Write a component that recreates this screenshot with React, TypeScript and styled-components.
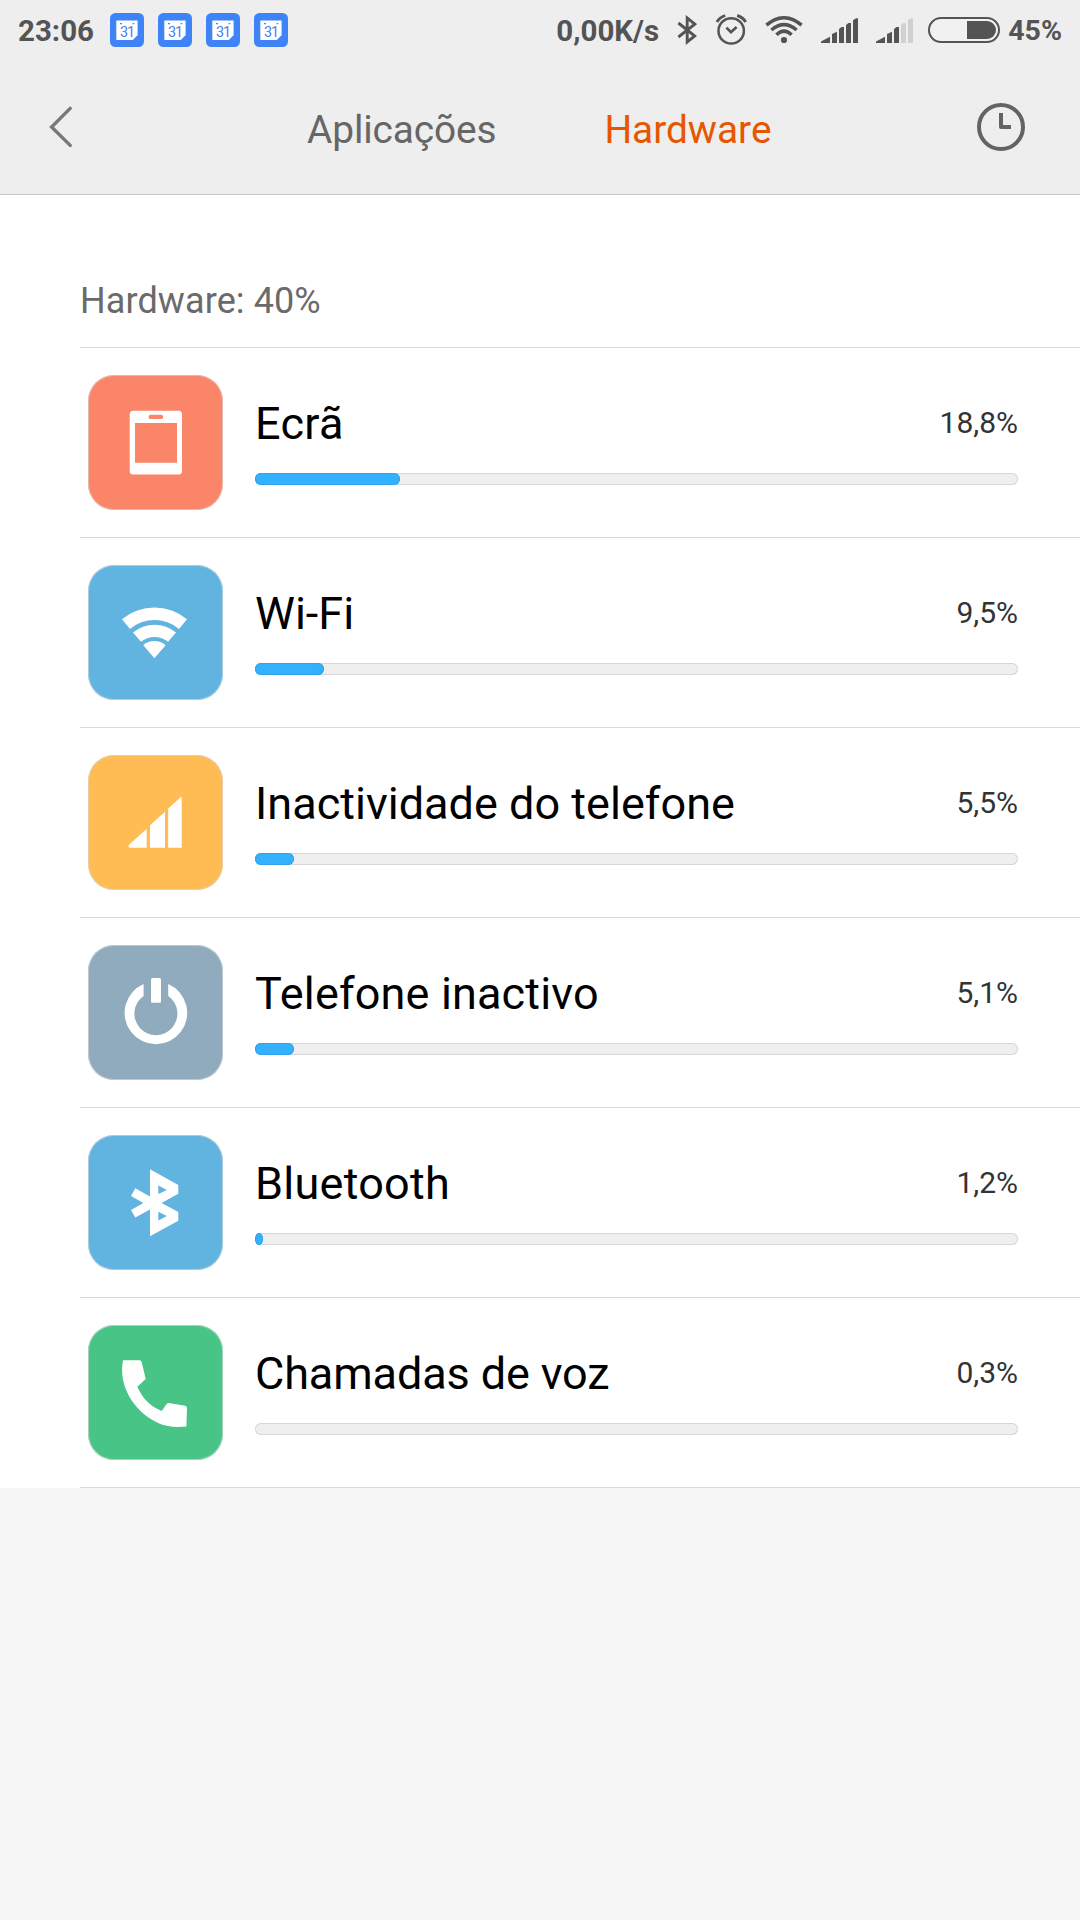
import React from 'react';
import styled, { createGlobalStyle } from 'styled-components';

const GlobalStyle = createGlobalStyle`
  * { box-sizing: border-box; }
  body {
    margin: 0;
    background: #f7f7f7;
    font-family: Roboto, "Noto Sans", sans-serif;
  }
  svg { display: block; flex: none; }
`;

const INK = '#545454';

const Screen = styled.div`
  width: 1080px;
  min-height: 1920px;
  background: #f7f7f7;
`;

const TopArea = styled.header`
  height: 195px;
  background: #eeeeee;
  border-bottom: 1px solid #c8c8c8;
`;

const StatusBar = styled.div`
  display: flex;
  justify-content: space-between;
  height: 60px;
  padding: 0 18px 0 18px;
  color: ${INK};
`;

const StatusGroup = styled.div`
  display: flex;
  align-items: center;
  height: 60px;
`;

const StatusText = styled.span<{ $size?: number }>`
  display: block;
  padding-top: 2px;
  font-size: ${p => p.$size ?? 29.5}px;
  font-weight: 700;
  line-height: 60px;
  white-space: nowrap;
`;

const StatusIcon = styled.span<{ $gap: number }>`
  margin-left: ${p => p.$gap}px;
`;

const NavBar = styled.nav`
  display: grid;
  grid-template-columns: 307px 1fr 103px;
  align-items: center;
  height: 134px;
`;

const IconButton = styled.button<{ $indent?: number }>`
  display: flex;
  border: 0;
  background: none;
  padding: 0 0 0 ${p => p.$indent ?? 0}px;
`;

const Tabs = styled.div`
  display: flex;
  gap: 108px;
`;

const Tab = styled.span<{ $active?: boolean }>`
  font-size: 38.8px;
  letter-spacing: ${p => (p.$active ? 0 : -0.1)}px;
  line-height: 50px;
  padding-top: 5px;
  color: ${p => (p.$active ? '#e65600' : '#666666')};
`;

const List = styled.main`
  background: #ffffff;
  padding-left: 80px;
`;

const SectionTitle = styled.h2`
  display: flex;
  align-items: flex-end;
  height: 153px;
  margin: 0;
  padding-bottom: 24px;
  border-bottom: 1px solid #d9d9d9;
  font-size: 36px;
  font-weight: 400;
  letter-spacing: 0.1px;
  line-height: 44px;
  color: #6a6a6a;
`;

const Row = styled.section`
  display: flex;
  align-items: center;
  gap: 32px;
  height: 190px;
  padding: 0 62px 0 8px;
  border-bottom: 1px solid #d9d9d9;
`;

const Tile = styled.div<{ $color: string }>`
  flex: none;
  width: 135px;
  height: 135px;
  border-radius: 26px;
  background: ${p => p.$color};
  box-shadow: inset 0 0 0 1px rgba(215, 215, 215, 0.65);
`;

const Details = styled.div`
  flex: 1;
  align-self: flex-start;
  display: flex;
  flex-direction: column;
  gap: 19px;
  padding-top: 46px;
`;

const Labels = styled.div`
  display: flex;
  justify-content: space-between;
  align-items: flex-start;
  height: 60px;
`;

const Name = styled.span<{ $tracking: number }>`
  font-size: 45px;
  letter-spacing: ${p => p.$tracking}px;
  line-height: 59px;
  color: #000000;
`;

const Percent = styled.span`
  font-size: 30px;
  line-height: 57px;
  color: #333333;
`;

const Track = styled.div`
  height: 12px;
  border-radius: 6px;
  background: #efefef;
  box-shadow: inset 0 0 0 1px #d6d6d6;
`;

const Fill = styled.div`
  height: 12px;
  border-radius: min(6px, 50%) / 6px;
  background: #33b1ff;
  box-shadow: inset 0 0 0 1px #2fa3eb;
`;

const CalendarIcon = () => (
  <svg width="34" height="34" viewBox="0 0 34 34">
    <rect width="34" height="34" rx="5.5" fill="#3f83f8" />
    <path d="M6.3 7.6H27.6V22.2L22.8 27H6.3Z" fill="#fff" />
    <path d="M10 10h2v1.3h-2zM22.6 10h1.6v1.3h-1.6z" fill="#3f83f8" />
    <text x="9.9" y="23.5" fontSize="14.4" letterSpacing="-1" fontWeight="400" fill="#3f83f8" fontFamily="Roboto, sans-serif">31</text>
  </svg>
);

const BluetoothStatus = () => (
  <svg width="20" height="30" viewBox="0 0 20 30" fill="none" stroke={INK} strokeWidth="2.9">
    <path d="M1.4 8 L17.8 21 L10.2 27 V3 L17.8 9.2 L1.4 22" />
  </svg>
);

const AlarmStatus = () => (
  <svg width="33" height="32" viewBox="0 0 33 32" fill="none" stroke={INK}>
    <circle cx="16.2" cy="16.9" r="12.7" strokeWidth="2.5" />
    <path d="M11.4 13.6 L16 18.2 L21.6 12.9" strokeWidth="2.7" />
    <path d="M1.9 7.9 Q4.6 3.4 10.2 1.5 M22.2 1.5 Q28 3.4 30.7 7.9" strokeWidth="2.9" />
  </svg>
);

const WifiStatus = () => (
  <svg width="38" height="28" viewBox="0 0 38 28" fill="none" stroke={INK} strokeWidth="3.5">
    <path d="M1.4 9.2 Q19 -5.6 36.6 9.2 M6.4 14 Q19 3.2 31.6 14 M11.4 18.8 Q19 11.3 26.6 18.8" />
    <circle cx="19" cy="24" r="3.1" fill={INK} stroke="none" />
  </svg>
);

const SignalStatus = ({ bars }: { bars: number }) => {
  const shapes = [
    'M0 23.5 L9 18.7 V25 H0Z',
    'M11 16 L16 13.7 V25 H11Z',
    'M18 11 L20.5 9 H23 V25 H18Z',
    'M25 7 L27.5 5 H30 V25 H25Z',
    'M32 2.3 L35 0.2 H37 V25 H32Z',
  ];
  return (
    <svg width="37" height="26" viewBox="0 -1 37 26">
      {shapes.map((d, i) => <path key={d} d={d} fill={i < bars ? INK : '#d0d0d0'} />)}
    </svg>
  );
};

const BatteryStatus = () => (
  <svg width="72" height="26" viewBox="0 0 72 26">
    <rect x="1" y="1" width="70" height="24" rx="12" fill="#f1f1f1" stroke={INK} strokeWidth="2" />
    <path d="M39 4H59A9 9 0 0 1 59 22H39Z" fill={INK} />
  </svg>
);

const BackIcon = () => (
  <svg width="24" height="42" viewBox="0 0 24 42" fill="none" stroke="#787878" strokeWidth="3.4" strokeLinecap="round">
    <path d="M21.2 2.4 L2.6 21 L21.2 39.4" />
  </svg>
);

const ClockIcon = () => (
  <svg width="48" height="48" viewBox="0 0 48 48" fill="none" stroke="#636363" strokeWidth="4">
    <circle cx="24" cy="24" r="22" />
    <path d="M24 10 V24 H34" strokeLinejoin="round" />
  </svg>
);

const Glyph = ({ children }: { children: React.ReactNode }) => (
  <svg width="135" height="135" viewBox="0 0 135 135" fill="#fff">{children}</svg>
);

const screenGlyph = (
  <path
    fillRule="evenodd"
    d="M45.2 35.8H90.5a3.5 3.5 0 0 1 3.5 3.5V96a3.5 3.5 0 0 1-3.5 3.5H45.2a3.5 3.5 0 0 1-3.5-3.5V39.3a3.5 3.5 0 0 1 3.5-3.5ZM47 48V87.7H89V48ZM62.8 39.7a2.2 2.2 0 0 0 0 4.4H73a2.2 2.2 0 0 0 0-4.4Z"
  />
);

const wifiGlyph = (
  <>
    <path d="M34 54.3A50.7 50.7 0 0 1 99 54.3L91 64A37.8 37.8 0 0 0 42 64Z" />
    <path d="M45 67.6A33.2 33.2 0 0 1 88 67.6L80 76.8A21.1 21.1 0 0 0 53 76.8Z" />
    <path d="M55.3 80.2A17.2 17.2 0 0 1 77.6 80.2L66.4 93.2Z" />
  </>
);

const signalGlyph = (
  <path d="M40.7 90L58.7 73.7V92.7H41.7Q40.7 92.7 40.7 91.7ZM62 70.3L77 56.7V92.7H62ZM80.2 53.6L93.7 41.3V92.7H80.2Z" />
);

const powerGlyph = (
  <>
    <path d="M55.6 39.1V51A21.5 21.5 0 1 0 80.2 51V39.1A31.3 31.3 0 1 1 55.6 39.1Z" />
    <rect x="63" y="33" width="10" height="24.7" rx="1.5" />
  </>
);

const bluetoothGlyph = (
  <path
    fillRule="evenodd"
    d="M62 34.3L90.3 50V58.7L73.6 68L90.3 76.9V85.7L62 101.3V74.4L47.3 82.5L43 75L55.3 68L43 61L47.3 53.3L62 61.6ZM70.3 50.5V59.1L78.8 54.9ZM70.3 76.7V85.4L78.8 81.1Z"
  />
);

const phoneGlyph = (
  <path d="M35 35.3H51.6Q53.2 35.5 53.7 37.3L57.7 54L49.4 61.7C54.5 73.5 62.3 81.3 73.7 85.9L79 78.6Q79.7 77.8 80.8 78L97.2 80.8Q99 81.3 99 83L98.4 101.5C87 102.7 77.6 101.8 68.6 97.3C46.5 86.4 30 61.5 35 35.3Z" />
);

const usage = [
  { name: 'Ecrã', tracking: 0.3, percent: '18,8%', width: 145, color: '#fb8569', glyph: screenGlyph },
  { name: 'Wi-Fi', tracking: 0, percent: '9,5%', width: 69, color: '#61b3e0', glyph: wifiGlyph },
  { name: 'Inactividade do telefone', tracking: 0.02, percent: '5,5%', width: 39, color: '#ffbb54', glyph: signalGlyph },
  { name: 'Telefone inactivo', tracking: 0.15, percent: '5,1%', width: 39, color: '#8fabbd', glyph: powerGlyph },
  { name: 'Bluetooth', tracking: 0.25, percent: '1,2%', width: 8, color: '#61b3e0', glyph: bluetoothGlyph },
  { name: 'Chamadas de voz', tracking: -0.12, percent: '0,3%', width: 0, color: '#48c586', glyph: phoneGlyph },
];

export default function App() {
  return (
    <Screen>
      <GlobalStyle />
      <TopArea>
        <StatusBar>
          <StatusGroup>
            <StatusText>23:06</StatusText>
            <StatusIcon $gap={16}><CalendarIcon /></StatusIcon>
            <StatusIcon $gap={14}><CalendarIcon /></StatusIcon>
            <StatusIcon $gap={14}><CalendarIcon /></StatusIcon>
            <StatusIcon $gap={14}><CalendarIcon /></StatusIcon>
          </StatusGroup>
          <StatusGroup>
            <StatusText>0,00K/s</StatusText>
            <StatusIcon $gap={18}><BluetoothStatus /></StatusIcon>
            <StatusIcon $gap={18}><AlarmStatus /></StatusIcon>
            <StatusIcon $gap={17}><WifiStatus /></StatusIcon>
            <StatusIcon $gap={18}><SignalStatus bars={5} /></StatusIcon>
            <StatusIcon $gap={18}><SignalStatus bars={3} /></StatusIcon>
            <StatusIcon $gap={15}><BatteryStatus /></StatusIcon>
            <StatusIcon $gap={8}><StatusText $size={28.5}>45%</StatusText></StatusIcon>
          </StatusGroup>
        </StatusBar>
        <NavBar>
          <IconButton $indent={49} aria-label="Voltar"><BackIcon /></IconButton>
          <Tabs>
            <Tab>Aplicações</Tab>
            <Tab $active>Hardware</Tab>
          </Tabs>
          <IconButton aria-label="Histórico"><ClockIcon /></IconButton>
        </NavBar>
      </TopArea>
      <List>
        <SectionTitle>Hardware: 40%</SectionTitle>
        {usage.map(item => (
          <Row key={item.name}>
            <Tile $color={item.color}><Glyph>{item.glyph}</Glyph></Tile>
            <Details>
              <Labels>
                <Name $tracking={item.tracking}>{item.name}</Name>
                <Percent>{item.percent}</Percent>
              </Labels>
              <Track>
                <Fill style={{ width: item.width }} />
              </Track>
            </Details>
          </Row>
        ))}
      </List>
    </Screen>
  );
}
